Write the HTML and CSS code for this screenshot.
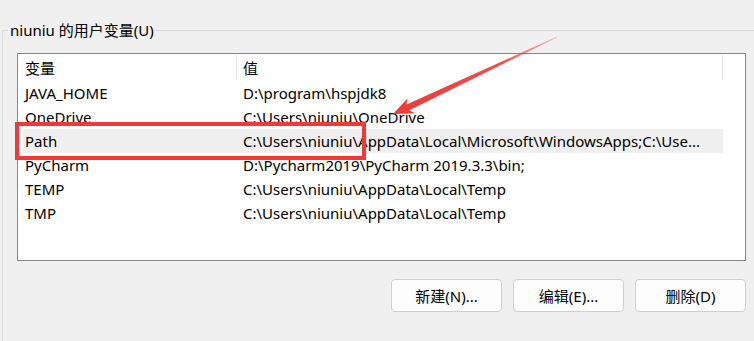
FILE: index.html
```html
<!DOCTYPE html>
<html lang="zh-CN">
<head>
  <meta charset="UTF-8">
  <meta name="viewport" content="width=device-width, initial-scale=1.0">
  <title>用户变量</title>
  <link rel="stylesheet" href="styles.css">
</head>
<body>
  <div class="group">
    <span class="legend">niuniu 的用户变量(U)</span>

    <div class="listbox">
      <div class="list-header">
        <div class="head-cell name">变量</div>
        <div class="head-cell value">值</div>
      </div>

      <div class="row"><span class="cell">JAVA_HOME</span><span class="cell">D:\program\hspjdk8</span></div>
      <div class="row"><span class="cell">OneDrive</span><span class="cell">C:\Users\niuniu\OneDrive</span></div>
      <div class="row selected"><span class="cell">Path</span><span class="cell">C:\Users\niuniu\AppData\Local\Microsoft\WindowsApps;C:\Use...</span></div>
      <div class="row"><span class="cell">PyCharm</span><span class="cell">D:\Pycharm2019\PyCharm 2019.3.3\bin;</span></div>
      <div class="row"><span class="cell">TEMP</span><span class="cell">C:\Users\niuniu\AppData\Local\Temp</span></div>
      <div class="row"><span class="cell">TMP</span><span class="cell">C:\Users\niuniu\AppData\Local\Temp</span></div>
    </div>

    <div class="actions">
      <button class="btn">新建(N)...</button>
      <button class="btn">编辑(E)...</button>
      <button class="btn">删除(D)</button>
    </div>
  </div>

  <!-- screenshot annotations -->
  <div class="mark-box"></div>
  <svg class="mark-arrow" width="754" height="341" viewBox="0 0 754 341">
    <defs>
      <linearGradient id="fade" gradientUnits="userSpaceOnUse" x1="557" y1="37" x2="400" y2="110">
        <stop offset="0" stop-color="#f03a3a" stop-opacity="0.25"/>
        <stop offset="0.35" stop-color="#f03a3a" stop-opacity="0.9"/>
        <stop offset="1" stop-color="#f03a3a"/>
      </linearGradient>
    </defs>
    <polygon fill="url(#fade)" points="393,114 407.5,98.5 406.6,104.4 556.8,36.6 557.2,37.4 409.2,110.2 414.8,113.2"/>
  </svg>
</body>
</html>
```

FILE: styles.css
```css
body {
  margin: 0;
  background: #f0f0f0;
  font-family: 'Noto Sans', 'Noto Sans CJK SC', sans-serif;
  font-size: 15px;
  color: #000000;
  overflow: hidden;
  position: relative;
  width: 754px;
  height: 341px;
}

/* group box runs on past the right edge of the shot */
.group {
  position: relative;
  margin: 30px 0 0 2px;
  border: 1px solid #dcdcdc;
  border-right: none;
  height: 300px;
  padding: 22px 0 0 14px;
}

.legend {
  position: absolute;
  top: -11px;
  left: 5px;
  padding: 0 2px;
  line-height: 20px;
  background: #f0f0f0;
}

.listbox {
  width: 729px;
  height: 208px;
  box-sizing: border-box;
  border: 1px solid #828790;
  background: #ffffff;
}

.list-header {
  display: flex;
  height: 27px;
}

.head-cell {
  box-sizing: border-box;
  height: 25px;
  margin-top: 1px;
  padding-top: 2px;
  line-height: 23px;
  border-right: 1px solid #e5e5e5;
}

.head-cell.name {
  width: 219px;
  padding-left: 7px;
}

.head-cell.value {
  width: 486px;
  padding-left: 6px;
}

.row {
  display: grid;
  grid-template-columns: 214px 486px;
  margin-left: 5px;
  width: 700px;
  height: 24px;
  line-height: 24px;
  white-space: nowrap;
}

.row.selected {
  background: #efefef;
}

.cell {
  overflow: hidden;
  padding-left: 2px;
}

.cell + .cell {
  padding-left: 6px;
}

.actions {
  display: flex;
  justify-content: flex-end;
  gap: 11px;
  width: 729px;
  margin-top: 18px;
}

.btn {
  width: 111px;
  height: 33px;
  border: 1px solid #d0d0d0;
  border-radius: 4px;
  background: #fdfdfd;
  font-family: inherit;
  font-size: 15px;
  color: #000000;
  padding: 0;
}

.mark-box {
  position: absolute;
  left: 15px;
  top: 122px;
  width: 351px;
  height: 38px;
  box-sizing: border-box;
  border: 4px solid #f03a3a;
}

.mark-arrow {
  position: absolute;
  left: 0;
  top: 0;
}
```
